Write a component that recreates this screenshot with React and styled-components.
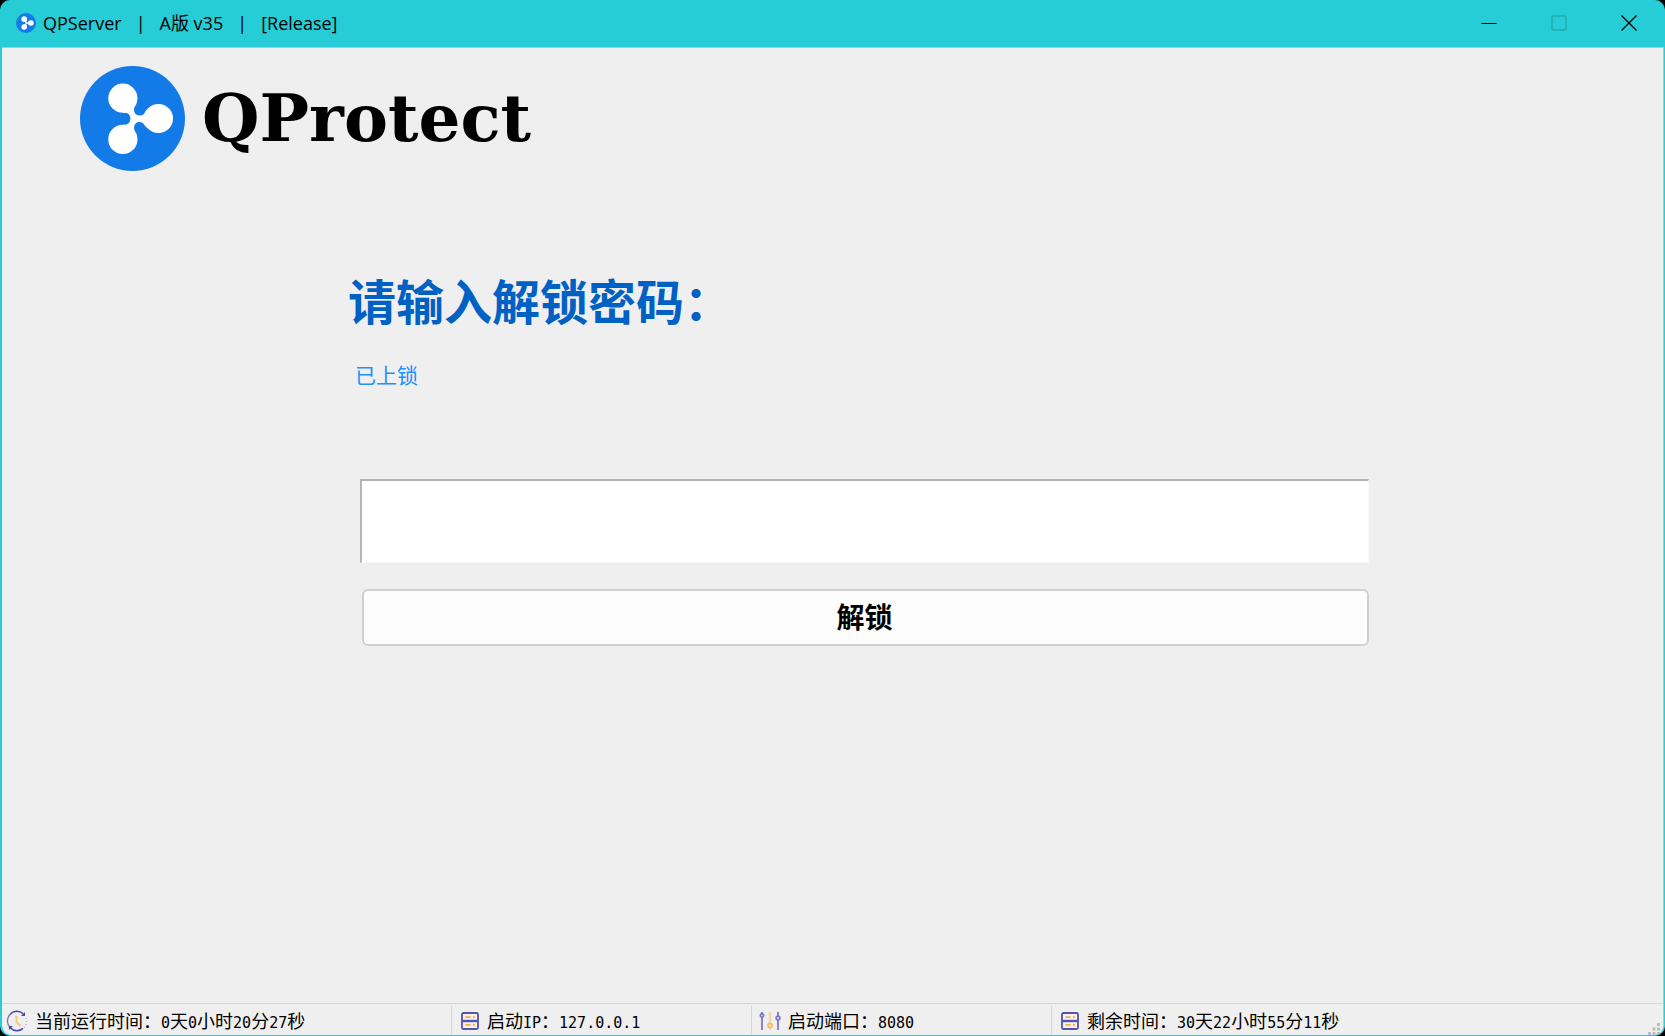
import React from "react";
import styled, { createGlobalStyle } from "styled-components";

const GlobalStyle = createGlobalStyle`
  * { box-sizing: border-box; }
  body { margin: 0; background: #000; }
`;

const uiFont = `"Open Sans", "Noto Sans CJK SC", sans-serif`;
const cjkFont = `"Noto Sans CJK SC", sans-serif`;

const Window = styled.div`
  display: flex;
  flex-direction: column;
  min-height: 100vh;
  overflow: hidden;
  background: #26cdd6;
  border: solid #26cdd6;
  border-width: 0 1px 1px 2px;
  border-radius: 10px;
  font-family: ${cjkFont};
  color: #000;
`;

const TitleBar = styled.header`
  display: flex;
  align-items: center;
  height: 47px;
  padding: 0 0 2px 14px;
  gap: 7px;
  font: 18px/24px ${uiFont};
`;

const TitleText = styled.span`
  flex: 1;
  white-space: pre;
`;

const WindowControls = styled.div`
  display: flex;
  align-self: stretch;
`;

const ControlButton = styled.button`
  display: grid;
  place-items: center;
  width: 70px;
  padding: 0;
  border: 0;
  background: transparent;
`;

const Client = styled.div`
  flex: 1;
  display: flex;
  flex-direction: column;
  background: #efefef;
  border: solid #b9c4c5;
  border-width: 1px 1px 0 0;
  border-radius: 0 0 9px 9px;
`;

const Brand = styled.div`
  display: flex;
  align-items: center;
  gap: 17px;
  height: 106px;
  margin: 17px 0 0 78px;
`;

const Wordmark = styled.h1`
  margin: 0;
  font: bold 66px/92px "DejaVu Serif", "Liberation Serif", serif;
`;

const Form = styled.form`
  flex: 1;
  display: flex;
  flex-direction: column;
  padding: 92px 294px 0 346px;
`;

const Heading = styled.label`
  font-size: 48px;
  line-height: 72px;
  font-weight: 700;
  color: #0061c4;
`;

const Status = styled.p`
  margin: 23px 0 0 7px;
  font-size: 21px;
  line-height: 32px;
  color: #1e90ff;
`;

const PasswordInput = styled.input`
  height: 84px;
  margin: 89px 0 0 12px;
  padding: 0 12px;
  border: solid;
  border-width: 2px 1px 1px 2px;
  border-color: #b4b4b4 #f8f8f8 #f8f8f8 #b4b4b4;
  background: #fff;
  font: 36px/48px ${cjkFont};
  outline: none;
`;

const UnlockButton = styled.button`
  height: 57px;
  margin: 26px 0 0 14px;
  padding: 0 2px 4px 0;
  border: 2px solid #d0d0d0;
  border-radius: 6px;
  background: #fdfdfd;
  font: bold 28px/40px ${cjkFont};
  color: #000;
`;

const StatusBar = styled.footer`
  display: grid;
  grid-template-columns: 449px 300px 300px 1fr auto;
  height: 32px;
  border-top: 1px solid #d6d6d6;
`;

const StatusCell = styled.div`
  display: flex;
  align-items: center;
  gap: ${(p) => p.$gap}px;
  margin: 2px 0 1px;
  padding-left: ${(p) => (p.$first ? 4 : p.$wide ? 7 : 9)}px;
  border-left: ${(p) => (p.$first ? "0" : "1px solid #d6d6d6")};
  font-size: 18px;
  line-height: 24px;
  white-space: nowrap;
`;

const StatusText = styled.span`
  padding-top: 2px;
`;

const HalfWidth = styled.span`
  font-family: "DejaVu Sans Mono", monospace;
  font-size: 15px;
`;

const Icon = styled.svg`
  display: block;
  flex: none;
`;

const Grip = styled(Icon)`
  align-self: end;
  margin: 0 3px 1px 0;
`;

function Logo({ size }) {
  return (
    <Icon width={size} height={size} viewBox="60 48 316 316" aria-hidden="true">
      <circle cx="218" cy="206" r="158" fill="#127be8" />
      <g fill="#fff">
        <circle cx="189" cy="145" r="44" />
        <circle cx="189" cy="269" r="44" />
        <circle cx="296" cy="206" r="44" />
        <path d="M189 189H196C217 190 217 224 196 225H189V269L232 262C224 250 222 240 223 230C226 213 248 213 254 226L262 234L296 206L262 178L254 190C248 200 226 200 223 184C222 172 224 164 232 152L189 145Z" />
      </g>
    </Icon>
  );
}

function ClockIcon() {
  return (
    <Icon width="22" height="22" viewBox="0 0 22 22" fill="none" aria-hidden="true">
      <path d="M4 4.5A9 9 0 0 1 17 3.600" stroke="#4745a8" strokeWidth="1.5" />
      <path d="M19 2v4h-4z" fill="#4745a8" />
      <path d="M4 4.500A9.500 9.500 0 0 0 4 17.500" stroke="#7775be" strokeWidth="1.3" />
      <path d="M4.500 18A9 9 0 0 0 17 18.400" stroke="#4745a8" strokeWidth="1.5" />
      <path d="M3 20v-4h4z" fill="#4745a8" />
      <path d="M20 8A9.500 9.500 0 0 1 18 17.500" stroke="#a9a7d8" strokeWidth="1.2" strokeDasharray="1 2" />
      <path d="M10.500 6v6l4 4" stroke="#f8c67a" strokeWidth="2" />
    </Icon>
  );
}

function ServerIcon() {
  return (
    <Icon width="18" height="18" viewBox="0 0 18 18" fill="none" aria-hidden="true">
      <rect x="1" y="1" width="16" height="16" rx="1.5" fill="#f5f1ee" stroke="#5553b2" strokeWidth="1.8" />
      <path d="M1 9h16" stroke="#5553b2" strokeWidth="2.4" />
      <path d="M4.5 5.2h5M12 5.2h2M4.5 12.8h5M12 12.8h2" stroke="#f7ad3c" strokeWidth="1.8" />
    </Icon>
  );
}

function SlidersIcon() {
  return (
    <Icon width="22" height="20" viewBox="0 0 22 20" fill="none" aria-hidden="true">
      <g stroke="#7b79c4" strokeWidth="1.8">
        <path d="M3 1v2M3 6v13M19 1v4M19 9v10" />
        <circle cx="3" cy="4.5" r="1.6" />
        <circle cx="19" cy="7" r="1.8" />
      </g>
      <path d="M11 1v11M11 17v2" stroke="#f9d59b" strokeWidth="2.4" />
      <circle cx="11" cy="14.5" r="2" stroke="#f8bd62" strokeWidth="1.8" />
    </Icon>
  );
}

// Latin letters and digits take half the width of a Chinese character.
function MixedText({ children }) {
  return (
    <StatusText>
      {children.split(/([A-Z0-9.]+)/).map((part, i) =>
        i % 2 ? <HalfWidth key={i}>{part}</HalfWidth> : part
      )}
    </StatusText>
  );
}

const cells = [
  { icon: <ClockIcon />, text: "当前运行时间：0天0小时20分27秒", first: true, gap: 7 },
  { icon: <ServerIcon />, text: "启动IP：127.0.0.1", gap: 8 },
  { icon: <SlidersIcon />, text: "启动端口：8080", wide: true, gap: 7 },
  { icon: <ServerIcon />, text: "剩余时间：30天22小时55分11秒", gap: 8 },
];

export default function App() {
  return (
    <Window>
      <GlobalStyle />
      <TitleBar>
        <Logo size={20} />
        <TitleText>{"QPServer   |   A版 v35   |   [Release]"}</TitleText>
        <WindowControls>
          <ControlButton type="button" aria-label="最小化">
            <Icon width="16" height="16" viewBox="0 0 16 16">
              <path d="M.5 8.5h15" stroke="#000" />
            </Icon>
          </ControlButton>
          <ControlButton type="button" aria-label="最大化" disabled>
            <Icon width="16" height="16" viewBox="0 0 16 16" fill="none">
              <rect x="1" y="1" width="14" height="14" rx="1" stroke="#20abb3" strokeWidth="1.4" />
            </Icon>
          </ControlButton>
          <ControlButton type="button" aria-label="关闭">
            <Icon width="16" height="16" viewBox="0 0 16 16">
              <path d="M.5.5l15 15M15.5.5l-15 15" stroke="#000" strokeWidth="1.3" />
            </Icon>
          </ControlButton>
        </WindowControls>
      </TitleBar>
      <Client>
        <Brand>
          <Logo size={105} />
          <Wordmark>QProtect</Wordmark>
        </Brand>
        <Form onSubmit={(e) => e.preventDefault()}>
          <Heading htmlFor="password">请输入解锁密码：</Heading>
          <Status>已上锁</Status>
          <PasswordInput id="password" type="password" />
          <UnlockButton type="submit">解锁</UnlockButton>
        </Form>
        <StatusBar>
          {cells.map((c) => (
            <StatusCell key={c.text} $first={c.first} $wide={c.wide} $gap={c.gap}>
              {c.icon}
              <MixedText>{c.text}</MixedText>
            </StatusCell>
          ))}
          <Grip width="12" height="12" viewBox="0 0 12 12" fill="#bcbcbc" aria-hidden="true">
            <path d="M9 0h3v3H9zM4.500 4.500h3v3h-3zM9 4.500h3v3H9zM0 9h3v3H0zM4.500 9h3v3h-3zM9 9h3v3H9z" />
          </Grip>
        </StatusBar>
      </Client>
    </Window>
  );
}
